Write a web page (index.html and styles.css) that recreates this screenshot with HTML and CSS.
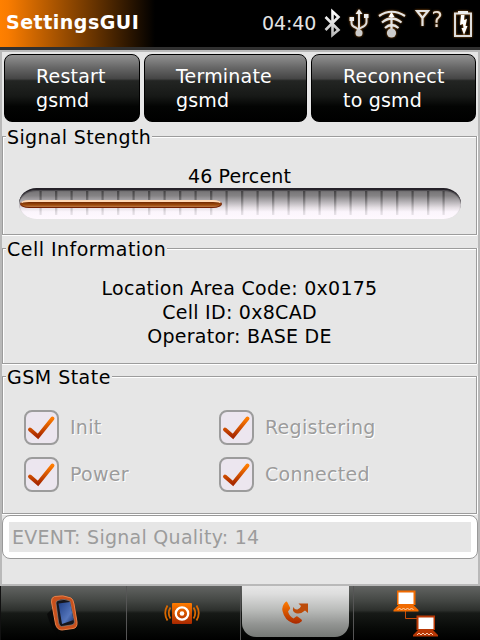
FILE: index.html
```html
<!DOCTYPE html>
<html lang="en">
<head>
<meta charset="utf-8">
<title>SettingsGUI</title>
<link rel="stylesheet" href="styles.css">
</head>
<body>
<svg class="defs" width="0" height="0" aria-hidden="true">
  <defs>
    <linearGradient id="flame" x1="0" y1="0" x2="0" y2="1"><stop offset="0" stop-color="#ff7c00"/><stop offset="1" stop-color="#a82800"/></linearGradient>
    <linearGradient id="silver" x1="0" y1="0" x2="0" y2="1"><stop offset="0" stop-color="#fff"/><stop offset="1" stop-color="#bbb"/></linearGradient>
    <linearGradient id="glass" x1="0" y1="0" x2="1" y2="1"><stop offset="0" stop-color="#1f3f85"/><stop offset=".65" stop-color="#5475bb"/><stop offset="1" stop-color="#1b3269"/></linearGradient>
    <symbol id="check" viewBox="0 0 31 31"><path d="M4 17.500 12 24.500 26.500 6.500" fill="none" stroke="url(#flame)" stroke-width="3.900" stroke-linecap="round" stroke-linejoin="miter"/></symbol>
  </defs>
</svg>
<header class="topbar">
  <h1 class="title">SettingsGUI</h1>
  <time class="clock">04:40</time>
  <svg class="status" width="160" height="47" viewBox="320 0 160 47" fill="none" stroke="#e4e4e4">
    <path d="M325.500 17 338.500 30 332.500 35V11.500L338.500 17 325.500 30" stroke="url(#silver)" stroke-width="2.600"/>
    <g class="glow" stroke="#dedede" stroke-width="2">
      <path d="M359 33V12M351.500 20v3q0 3 4 4.500l3.500 2.500M366.500 17v5q0 3-4 5l-3.500 2"/>
      <path d="M359 9l-3.500 5h7zM349.500 17h4.500v4h-4.500zM364 14h4.500v4H364z" fill="#eee" stroke="none"/>
      <circle cx="359" cy="33" r="3.500" fill="#ccc" stroke="none"/>
    </g>
    <g class="glow" stroke="#e5e5e5" stroke-width="2.200">
      <path d="M379 16q12.500-8.500 26 0M382 22.500q9.500-8 19.500 0M385 28q6.500-6 13.500 0M391.500 14v16"/>
      <path d="M391.500 12l-3 5h6z" fill="#fff" stroke="none"/>
      <circle cx="391.500" cy="33" r="4.600" fill="#ccc" stroke="none"/>
    </g>
    <path class="glow" d="M417 11h11l-5.500 7zM422.500 17v9" stroke-width="2.200"/>
    <text class="glow query" x="431.500" y="26.500">?</text>
    <g class="glow">
      <path d="M455 13.500h16v22.500h-16z" stroke="#ddd" stroke-width="2"/>
      <path d="M458 11h10v3h-10z" fill="#eee" stroke="none"/>
      <path d="M461 15h3.500l-.5 5 3-1-1.500 7h2l-3.500 9-2.500-7h2l-.5-4-3 1z" fill="#fff" stroke="none"/>
    </g>
  </svg>
</header>
<main class="content">
  <div class="actions">
    <button class="action">Restart<br>gsmd</button>
    <button class="action">Terminate<br>gsmd</button>
    <button class="action">Reconnect<br>to gsmd</button>
  </div>
  <section class="frame signal">
    <h2 class="legend">Signal Stength</h2>
    <p class="percent">46 Percent</p>
    <div class="track"><div class="notches"></div><div class="level" style="width:45.700%"></div></div>
  </section>
  <section class="frame cell">
    <h2 class="legend wide">Cell Information</h2>
    <p class="info">Location Area Code: 0x0175<br>Cell ID: 0x8CAD<br>Operator: BASE DE</p>
  </section>
  <section class="frame state">
    <h2 class="legend wide">GSM State</h2>
    <div class="checks">
      <div class="check"><svg class="box"><use href="#check"/></svg><span>Init</span></div>
      <div class="check"><svg class="box"><use href="#check"/></svg><span>Registering</span></div>
      <div class="check"><svg class="box"><use href="#check"/></svg><span>Power</span></div>
      <div class="check"><svg class="box"><use href="#check"/></svg><span>Connected</span></div>
    </div>
  </section>
  <div class="entry"><div class="value">EVENT: Signal Quality: 14</div></div>
</main>
<nav class="tabs">
  <div class="tab">
    <svg width="125" height="54" viewBox="1 586 125 54">
      <path d="M47 614 54 607 58 635Q51 629 47 614z" fill="#050505" opacity=".7"/>
      <path d="M54.500 596.500Q63 594.500 71 598 73 599 74 604L77 622Q77.500 628 73 628.500L62 630Q57 630 55.500 624L51.500 602Q51 597.500 54.500 596.500z" fill="#c8501c" stroke="#e8824a"/>
      <path d="M58 600.500Q64 598 70 601L74.500 622Q74 625 71 625L61.500 626.500Q59 626 58.500 622L56 603Q56 601 58 600.500z" fill="#16161c" stroke="#8f8d8c" stroke-width=".6"/>
      <path d="M58.500 603.500 70 602 73.500 620 62 624z" fill="url(#glass)"/>
    </svg>
  </div>
  <div class="tab">
    <svg width="113" height="54" viewBox="127 586 113 54" fill="none">
      <rect x="172" y="603" width="20" height="21" rx="1" fill="url(#flame)"/>
      <circle cx="182" cy="613.500" r="6.200" stroke="#fff" stroke-width="2.300"/><circle cx="182" cy="613.500" r="2.300" fill="#fff"/>
      <path d="M170.500 607.500q-3.500 5.500 0 11M167.500 605.500q-4.500 7.500 0 15M193.500 607.500q3.500 5.500 0 11M196.500 605.500q4.500 7.500 0 15" stroke="#d96800" stroke-width="1.800"/>
    </svg>
  </div>
  <div class="tab active">
    <div class="pill">
      <svg width="108" height="51" viewBox="242 586 108 51">
        <path d="M285.500 602q-4 4-3 9 2 9 10 12 5 2 9-1.500 1-1 0-2l-4-3q-1-.5-2 .5l-2 1.500q-4-2-5.500-7l1.500-2q1-1 .5-2l-2.500-5q-1-1.500-2-.5z" fill="url(#flame)"/>
        <path d="M298.500 603.500h9.500v9.500l-3-2.500q-5 4.500-9.500 2.500-4-2-2-6 1 3 4 2.500 2.500-.5 3.500-3.500z" fill="#bd4c0a"/>
      </svg>
    </div>
  </div>
  <div class="tab">
    <svg width="126" height="54" viewBox="354 586 126 54">
      <path d="M405.500 610v8.500H418" fill="none" stroke="#c84c08"/>
      <path d="M397 590.500h18.500v14.500h-2l5 5v1.500h-25V610l5-5H397z" fill="#f06a00"/><path d="M398.500 592.500h15v11.500h-15z" fill="#fff"/><path d="M397.500 610l2-2 2 2 2-2 2 2 2-2 2 2 2-2 2 2" fill="none" stroke="#ffd9b8"/>
      <path d="M416.500 615.500H435v14.500h-2l5 5v1.500h-25V635l5-5h-1.500z" fill="#b83805"/><path d="M418.500 617.500h15V629h-15z" fill="#fff"/><path d="M417 635l2-2 2 2 2-2 2 2 2-2 2 2 2-2 2 2" fill="none" stroke="#f5c9b0"/>
    </svg>
  </div>
</nav>
</body>
</html>
```
FILE: styles.css
```css
* { box-sizing: border-box; }
body {
  margin: 0;
  width: 480px;
  height: 640px;
  display: flex;
  flex-direction: column;
  overflow: hidden;
  background: #e6e6e6;
  color: #000;
  font: 19px/24px "DejaVu Sans", sans-serif;
  letter-spacing: .27px;
}
h1, h2, p { margin: 0; font-weight: normal; font-size: inherit; }
svg { display: block; }
.defs { position: absolute; }
.topbar {
  height: 50px;
  flex: none;
  display: flex;
  background: linear-gradient(90deg, #ff8000 0, #f97c00 8px, #000 155px);
  border-bottom: 3px solid #303030;
  color: #fff;
}
.title { width: 262px; padding: 10px 0 0 6px; font-weight: bold; letter-spacing: .5px; }
.clock { width: 58px; padding-top: 11px; color: #e4e4e4; letter-spacing: -.1px; }
.status { flex: none; }
.glow { filter: drop-shadow(0 0 1px #a45e12); }
.query { font-size: 21px; fill: #e8e0d8; stroke: none; }
.content {
  height: 536px;
  flex: none;
  border: 2px solid #b9b9b9;
}
.actions {
  display: grid;
  grid-template-columns: 136px 163px 165px;
  gap: 4px;
  padding: 2px 2px 0;
}
.action {
  height: 68px;
  padding: 9px 0 11px 31px;
  border: 1px solid #000;
  border-radius: 8px;
  background: linear-gradient(#929292 0, #696969 18%, #454545 36%, #232523 39%, #171917 62%, #030403 78%, #000 100%);
  color: #fff;
  font: inherit;
  letter-spacing: .2px;
  text-align: left;
}
.frame {
  position: relative;
  width: 475px;
  border: 1px solid #9c9c9c;
  box-shadow: inset 1px 1px #fff, 0 1px #fff, 1px 0 #fff;
}
.signal { height: 99px; margin-top: 14px; }
.cell { height: 116px; margin-top: 13px; }
.state { height: 138px; margin-top: 12px; }
.legend {
  position: absolute;
  top: -12px;
  left: 3px;
  padding: 0 1px;
  background: #e6e6e6;
  letter-spacing: .35px;
}
.wide { letter-spacing: .48px; }
.percent { padding-top: 27px; text-align: center; letter-spacing: .15px; }
.track {
  width: 442px;
  height: 31px;
  margin-left: 16px;
  padding-top: 10px;
  position: relative;
  border-top: 2px solid #252229;
  border-radius: 18px / 16px;
  background: linear-gradient(#737173 0, #858385 20%, #bbb7bb 43%, #e3dde2 60%, #fbf5fc 75%, #fff9ff 100%);
  box-shadow: inset 0 1px 1px #4a484c;
}
.notches {
  position: absolute;
  inset: 1px 16px 4px 20px;
  background: repeating-linear-gradient(90deg, #0000 0, #0006 1px 2px, #0000 3.500px 15.500px);
  -webkit-mask-image: linear-gradient(#000, #0003);
  mask-image: linear-gradient(#000, #0003);
}
.level {
  position: relative;
  height: 8px;
  margin-left: 1px;
  border: 1px solid #742000;
  border-top: 2px solid #ffd8b4;
  border-radius: 9px / 4px;
  background: linear-gradient(#702800, #a04c0c 60%, #b97a4a);
}
.info { padding-top: 27px; text-align: center; }
.checks {
  display: grid;
  grid-template-columns: 195px 195px;
  gap: 12px 0;
  padding: 33px 0 0 21px;
}
.check {
  display: flex;
  align-items: center;
  gap: 11px;
  color: #9c9c9c;
  text-shadow: 1px 1px #fff;
}
.check span { padding-bottom: 2px; }
.box {
  width: 35px;
  height: 35px;
  border: 2px solid #9c9c9c;
  border-radius: 8px;
  background: #ece6ef;
}
.entry {
  height: 44px;
  margin-top: 1px;
  padding: 6px;
  border: 1px solid #999;
  border-radius: 8px;
  background: #fff;
}
.value { height: 30px; padding: 3px; background: #e6e6e6; color: #9c9c9c; }
.tabs {
  height: 54px;
  flex: none;
  display: grid;
  grid-template-columns: 126px 114px 113px 127px;
  background: #000;
}
.tab {
  border-left: 1px solid #555;
  background: linear-gradient(#626462 0, #444744 27%, #2d302d 45%, #171a17 50%, #080a08 78%, #000 100%);
}
.tab:first-child { border-left-color: #111; }
.active { padding: 0 4px 0 1px; }
.pill {
  height: 51px;
  overflow: hidden;
  border-radius: 0 0 14px 14px;
  background: linear-gradient(#e6e6e6 0, #dedede 15%, #b8bab8 48%, #929492 75%, #767976 100%);
}
```
